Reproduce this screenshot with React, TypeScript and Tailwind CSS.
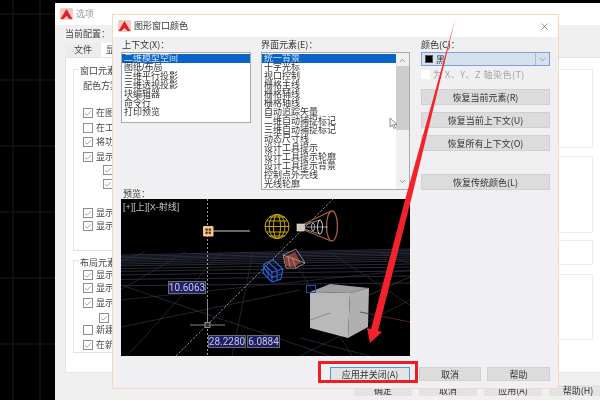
import React from 'react';
import { Check, ChevronDown, ChevronUp, X } from 'lucide-react';

const contextItems = ['二维模型空间', '图纸/布局', '三维平行投影', '三维透视投影', '块编辑器', '命令行', '打印预览'];

const elementItems = [
  '统一背景', '十字光标', '视口控制', '栅格主线', '栅格辅线', '栅格轴线', '自动追踪矢量',
  '二维自动捕捉标记', '三维自动捕捉标记', '动态尺寸线', '设计工具提示', '设计工具提示轮廓',
  '设计工具提示背景', '控制点外壳线', '光线轮廓',
];

const AcadLogo = () => (
  <svg width="13" height="12" viewBox="0 0 13 12" className="shrink-0">
    <rect x="0" y="0" width="13" height="12" rx="1.5" fill="#f3c9c4" />
    <path d="M6.5 1 L12.5 11 L9.5 11 L6.5 8 L3.5 11 L0.5 11 Z" fill="#d9252a" />
  </svg>
);

const CheckRow = ({ checked = true, label, className }: { checked?: boolean; label?: string; className: string }) => (
  <div className={`flex items-center gap-[3px] h-[10px] ${className}`}>
    <span className="w-[10px] h-[10px] shrink-0 bg-white border border-[#8d8d8d] flex items-center justify-center">
      {checked && <Check size={9} strokeWidth={1.5} className="text-[#444]" />}
    </span>
    {label && <span className="text-[9px] leading-[10px] whitespace-nowrap">{label}</span>}
  </div>
);

const GreyButton = ({ label, className }: { label: string; className: string }) => (
  <button className={`flex items-center justify-center bg-[#dcdcdc] border border-[#d0d0d0] text-[9px] leading-none text-[#333] ${className}`}>
    {label}
  </button>
);

const PreviewDrawing = () => {
  const bandY = [249, 250.5, 252, 253.5, 255, 257, 259, 261, 264, 267, 271, 276, 283];
  const fans = [-260, -170, -90, -20, 60, 150, 260, 380, 520];
  return (
    <svg width="289" height="157" viewBox="121 199 289 157" className="absolute inset-0">
      {/* ground grid */}
      {bandY.map((y) => (
        <line key={y} x1="121" y1={y + 6 - (y - 250) * 0.1} x2="410" y2={y} stroke="#3b3e55" strokeWidth="0.7" />
      ))}
      {fans.map((dx) => (
        <line key={dx} x1={262 + dx * 0.45} y1="252" x2={262 + dx * 1.5} y2="356" stroke="#2e3040" strokeWidth="0.7" />
      ))}
      <line x1="121" y1="327" x2="300" y2="290" stroke="#33354a" strokeWidth="0.7" />
      <line x1="121" y1="285" x2="330" y2="356" stroke="#33354a" strokeWidth="0.7" />
      <line x1="121" y1="300" x2="410" y2="270" stroke="#2e3040" strokeWidth="0.7" />
      <line x1="300" y1="356" x2="410" y2="300" stroke="#2e3040" strokeWidth="0.7" />
      <line x1="300" y1="338" x2="370" y2="356" stroke="#33354a" strokeWidth="0.7" />

      {/* axis lines */}
      <line x1="207.5" y1="199" x2="207.5" y2="300" stroke="#999" strokeWidth="1" strokeDasharray="2 2" />
      <line x1="207.5" y1="300" x2="207.5" y2="325" stroke="#8a8a8a" strokeWidth="1" />
      <line x1="207.5" y1="325" x2="207.5" y2="356" stroke="#999" strokeWidth="1" strokeDasharray="2 2" />
      <line x1="176" y1="356" x2="333" y2="199" stroke="#aaa" strokeWidth="0.8" strokeDasharray="2.5 1.5" />
      <line x1="213" y1="231" x2="250" y2="231" stroke="#ccc" strokeWidth="1" />
      <line x1="190" y1="325" x2="225" y2="325" stroke="#888" strokeWidth="1" />
      <rect x="205" y="322.5" width="5" height="5" fill="#333" stroke="#aaa" strokeWidth="0.8" />

      {/* grip */}
      <rect x="203" y="226" width="10.5" height="10.5" rx="1" fill="#fcc27f" />
      <rect x="205.5" y="228.5" width="2.2" height="2.2" fill="#333" />
      <rect x="208.7" y="228.5" width="2.2" height="2.2" fill="#333" />
      <rect x="205.5" y="231.7" width="2.2" height="2.2" fill="#333" />
      <rect x="208.7" y="231.7" width="2.2" height="2.2" fill="#333" />

      {/* globe */}
      <g fill="none" stroke="#dcb50f" strokeWidth="0.9">
        <circle cx="277" cy="226.5" r="12" />
        <ellipse cx="277" cy="226.5" rx="8" ry="12" />
        <ellipse cx="277" cy="226.5" rx="3.5" ry="12" />
        <line x1="265" y1="226.5" x2="289" y2="226.5" />
        <line x1="266.5" y1="221" x2="287.5" y2="221" />
        <line x1="266.5" y1="232" x2="287.5" y2="232" />
        <line x1="269" y1="217" x2="285" y2="217" />
        <line x1="269" y1="236" x2="285" y2="236" />
      </g>

      {/* camera */}
      <g fill="none">
        <rect x="297" y="224" width="7.5" height="7" fill="#cfc7ba" stroke="#eee" strokeWidth="0.6" />
        <ellipse cx="332" cy="226" rx="5.5" ry="15" stroke="#a8623e" strokeWidth="1.3" />
        <line x1="304" y1="224" x2="331" y2="211" stroke="#a8623e" strokeWidth="1.1" />
        <line x1="304" y1="230" x2="331" y2="241" stroke="#a8623e" strokeWidth="1.1" />
        <ellipse cx="320" cy="227" rx="2.5" ry="7" stroke="#e8e8e8" strokeWidth="0.9" />
        <ellipse cx="313" cy="227" rx="1.5" ry="4" stroke="#cfcfcf" strokeWidth="0.8" />
        <line x1="304" y1="225" x2="320" y2="220" stroke="#ccc" strokeWidth="0.7" />
        <line x1="304" y1="229" x2="320" y2="234" stroke="#ccc" strokeWidth="0.7" />
        <line x1="304" y1="227" x2="328" y2="227" stroke="#ccc" strokeWidth="0.7" />
      </g>

      {/* wire boxes */}
      <path d="M284 257 L295 252 L301 263 L293 267 L286 266 Z" fill="#8a4036" />
      <g fill="none" stroke="#ad9fa2" strokeWidth="0.8">
        <path d="M283 255 L296 249 L305 263 L296 268 L286 268 Z" />
        <path d="M283 255 L292 258 L296 268" />
        <path d="M292 258 L305 263" />
        <path d="M288 256.5 L290 267" />
      </g>
      <g fill="none" stroke="#2b5ed6" strokeWidth="1.2">
        <path d="M264 264 L273 260 L283 269 L281 279 L272 282 L263 273 Z" />
        <path d="M264 264 L272 272 L283 269" />
        <path d="M272 272 L272 282" />
        <path d="M268 268 L268 277" />
        <path d="M277 271 L277 281" />
        <path d="M263.5 268 L272 277 L282 274" />
        <path d="M268 262 L277 270" />
      </g>

      {/* cube */}
      <path d="M310 292 L330 284 L369 288 L350 293 Z" fill="#9f9f9f" />
      <path d="M310 292 L350 293 L348 338 L310 328 Z" fill="#b9b9b9" />
      <path d="M350 293 L369 288 L368 327 L348 338 Z" fill="#b0b0b0" />
      <rect x="306.5" y="285.5" width="9" height="7" fill="none" stroke="#2b49b8" strokeWidth="1" />
      <line x1="310" y1="320" x2="330" y2="313" stroke="#7c7c92" strokeWidth="0.8" />
      <line x1="360" y1="312" x2="410" y2="322" stroke="#6b2a2a" strokeWidth="0.8" />
      <line x1="369" y1="295" x2="410" y2="277" stroke="#274a27" strokeWidth="0.8" />
    </svg>
  );
};

const DimTag = ({ value, className }: { value: string; className: string }) => (
  <span className={`absolute h-[13px] bg-[#20206a] border border-[#6b6b6b] flex items-center justify-center font-['Roboto',sans-serif] text-[10px] leading-none text-[#c6c6d8] ${className}`}>
    {value}
  </span>
);

const ColorDialog = () => (
  <div className="absolute left-[112px] top-[14px] w-[447px] h-[375px] border border-[#f3d9bd] bg-[#f0eff1] flex flex-col text-[#333] z-10">
    <div className="h-[22px] bg-white flex items-center pl-[5px] pr-[8px] gap-[2px]">
      <AcadLogo />
      <span className="text-[9px] ml-[1px]">图形窗口颜色</span>
      <X size={11} strokeWidth={1.3} className="ml-auto text-[#444]" />
    </div>

    <div className="flex pl-[8px] gap-[11px] h-[319px]">
      <div className="w-[289px] flex flex-col">
        <div className="flex gap-[10px] h-[153px]">
          <div className="w-[130px] flex flex-col">
            <div className="h-[15px] pt-[3px] text-[9px] leading-[10px] pl-[1px]">上下文(X)：</div>
            <div className="h-[71px] bg-white border border-[#a9a9a9] text-[9px] leading-[9px] pt-[1px] font-['Liberation_Sans','Noto_Sans_CJK_SC',sans-serif]">
              {contextItems.map((item, i) => (
                <div key={item} className={i === 0 ? 'bg-[#0a64c8] text-[#cfe2f7] pl-[2px] h-[9px]' : 'pl-[2px] h-[9px]'}>{item}</div>
              ))}
            </div>
          </div>
          <div className="w-[149px] flex flex-col">
            <div className="h-[15px] pt-[3px] text-[9px] leading-[10px]">界面元素(E)：</div>
            <div className="h-[138px] bg-white border border-[#a9a9a9] flex overflow-hidden relative">
              <div className="flex-1 text-[9px] leading-[9px] pt-[1px] overflow-hidden font-['Liberation_Sans','Noto_Sans_CJK_SC',sans-serif]">
                {elementItems.map((item, i) => (
                  <div key={item} className={i === 0 ? 'bg-[#0a64c8] text-[#cfe2f7] pl-[2px] h-[9px]' : 'pl-[2px] h-[9px]'}>{item}</div>
                ))}
              </div>
              <div className="w-[13px] bg-[#f0f0f0] flex flex-col items-center">
                <ChevronUp size={9} strokeWidth={1.6} className="text-[#555] mt-[3px]" />
                <div className="w-full h-[64px] bg-[#cdcdcd] mt-[1px]" />
                <ChevronDown size={9} strokeWidth={1.6} className="text-[#555] mt-auto mb-[3px]" />
              </div>
              {/* mouse cursor */}
              <svg width="9" height="12" viewBox="0 0 9 12" className="absolute left-[127px] top-[64px]">
                <path d="M1 1 L1 10 L3.2 8 L5 11.5 L6.5 10.8 L4.8 7.5 L8 7.5 Z" fill="#f4f4f4" stroke="#777" strokeWidth="0.8" />
              </svg>
            </div>
          </div>
        </div>
        <div className="h-[9px] text-[9px] leading-[9px] pl-[2px] font-['Liberation_Sans','Noto_Sans_CJK_SC',sans-serif]">预览：</div>
        <div className="relative w-[289px] h-[157px] bg-black overflow-hidden">
          <PreviewDrawing />
          <span className="absolute left-[2px] top-[3px] text-[9px] leading-[11px] text-[#c0c0c0] font-['Liberation_Sans','Noto_Sans_CJK_SC',sans-serif]">[+][上][X-射线]</span>
          <DimTag value="10.6063" className="left-[47px] top-[82px] w-[38px]" />
          <DimTag value="28.2280" className="left-[87px] top-[136px] w-[38px]" />
          <DimTag value="6.0884" className="left-[126px] top-[136px] w-[33px]" />
        </div>
      </div>

      <div className="w-[129px] flex flex-col">
        <div className="h-[15px] pt-[3px] text-[9px] leading-[10px]">颜色(C)：</div>
        <div className="h-[14px] bg-[#d6e0ee] border border-[#7da2ce] flex items-center pl-[3px]">
          <span className="w-[8px] h-[8px] bg-black border border-[#555]" />
          <span className="text-[9px] leading-none ml-[3px]">黑</span>
          <span className="ml-auto w-[14px] h-full border-l border-[#a9bcd3] flex items-center justify-center">
            <ChevronDown size={9} strokeWidth={1.6} className="text-[#777]" />
          </span>
        </div>
        <div className="flex items-center gap-[3px] h-[9px] mt-[4px]">
          <span className="w-[9px] h-[9px] bg-white" />
          <span className="text-[9px] leading-none tracking-[0.5px] text-[#a5a5a5] whitespace-nowrap">为 X、Y、Z 轴染色(T)</span>
        </div>
        <GreyButton label="恢复当前元素(R)" className="h-[16px] mt-[10px]" />
        <GreyButton label="恢复当前上下文(U)" className="h-[16px] mt-[7px]" />
        <GreyButton label="恢复所有上下文(O)" className="h-[16px] mt-[7px]" />
        <GreyButton label="恢复传统颜色(L)" className="h-[16px] mt-[23px]" />
      </div>
    </div>

    <div className="flex justify-end items-start pr-[8px] mt-[11px]">
      <GreyButton label="应用并关闭(A)" className="w-[80px] h-[14px] !bg-[#e3e3e3] !border-[#4a9ad4]" />
      <GreyButton label="取消" className="w-[62px] h-[14px] ml-[9px]" />
      <GreyButton label="帮助" className="w-[63px] h-[14px] ml-[6px]" />
    </div>
  </div>
);

const OptionsWindow = () => (
  <div className="w-[545px] h-[397px] mt-[3px] bg-[#f0f0f0] flex flex-col text-[#444] shrink-0">
    <div className="h-[22px] bg-white flex items-center pl-[5px] gap-[3px]">
      <AcadLogo />
      <span className="text-[9px] text-[#999]">选项</span>
    </div>
    <div className="h-[18px] flex items-center pl-[10px] text-[9px]">当前配置：</div>
    <div className="h-[14px] flex pl-[10px] text-[9px]">
      <span className="w-[36px] flex items-center justify-center bg-[#ececec]">文件</span>
      <span className="w-[36px] flex items-center pl-[5px] bg-white">显示</span>
    </div>
    <div className="ml-[10px] h-[316px] bg-white border-l border-t border-b border-[#e3e3e3] flex pl-[7px] pr-[7px] pt-[11px] gap-[8px]">
      {/* left column: most of it sits behind the colour dialog */}
      <div className="w-[250px] shrink-0 flex flex-col gap-[9px]">
        <div className="relative h-[182px] border border-[#e3e3e3] pl-[9px] flex flex-col">
          <span className="absolute left-[5px] top-[-5px] bg-white px-[1px] text-[9px] leading-[11px]">窗口元素</span>
          <div className="mt-[10px] h-[12px] text-[9px] leading-[12px]">配色方案</div>
          <CheckRow label="在图" className="mt-[16px]" />
          <CheckRow checked={false} label="在工" className="mt-[5px]" />
          <CheckRow label="将功" className="mt-[4px]" />
          <CheckRow label="显示" className="mt-[5px]" />
          <CheckRow className="mt-[3px] ml-[20px]" />
          <CheckRow className="mt-[4px] ml-[20px]" />
          <CheckRow label="显示" className="mt-[19px]" />
          <CheckRow label="显示" className="mt-[3px]" />
        </div>
        <div className="relative h-[93px] border border-[#e3e3e3] pl-[9px] flex flex-col">
          <span className="absolute left-[5px] top-[-4px] bg-white px-[1px] text-[9px] leading-[11px]">布局元素</span>
          <CheckRow label="显示" className="mt-[9px]" />
          <CheckRow label="显示" className="mt-[3px]" />
          <CheckRow label="显示" className="mt-[5px]" />
          <CheckRow className="mt-[5px] ml-[16px]" />
          <CheckRow checked={false} label="新建" className="mt-[2px]" />
          <CheckRow label="在新" className="mt-[5px]" />
        </div>
      </div>
      <div className="flex-1 flex flex-col">
        <div className="h-[79px] border border-[#ececec]" />
        <div className="h-[77px] border border-[#ececec] mt-[8px]" />
        <div className="h-[25px] border border-[#ececec] mt-[7px]" />
        <div className="h-[66px] border border-[#ececec] mt-[9px]" />
      </div>
    </div>
    <div className="flex gap-[7px] pl-[299px] mt-[12px]">
      {['确定', '取消', '应用(A)', '帮助(H)'].map((label) => (
        <button key={label} className="w-[58px] h-[11px] shrink-0 bg-[#e3e3e3] flex items-center justify-center text-[9px] leading-none text-[#333]">
          {label}
        </button>
      ))}
    </div>
  </div>
);

const App: React.FC = () => {
  return (
    <div className="relative w-[600px] h-[400px] overflow-hidden bg-black flex font-['Noto_Sans_CJK_SC','Noto_Sans',sans-serif] blur-[0.35px]">
      {/* model space behind the window */}
      <svg width="55" height="400" className="shrink-0">
        {[13, 40].map((x) => (
          <line key={x} x1={x} y1="0" x2={x} y2="400" stroke="#1a1a1a" />
        ))}
        {[14, 80, 146, 212, 278, 344].map((y) => (
          <line key={y} x1="0" y1={y} x2="55" y2={y} stroke="#1a1a1a" />
        ))}
      </svg>
      <OptionsWindow />
      <ColorDialog />

      {/* red annotation arrow and box */}
      <svg width="600" height="400" className="absolute inset-0 z-20 pointer-events-none">
        <path d="M455 20 L411 200 L378 331 L382 332 L370 343 L367 328 L371 329 L405 200 Z" fill="#f5222d" />
      </svg>
      <div className="absolute left-[318px] top-[361px] w-[100px] h-[22px] border-[3px] border-[#ee1c25] z-20" />
    </div>
  );
};

export default App;
